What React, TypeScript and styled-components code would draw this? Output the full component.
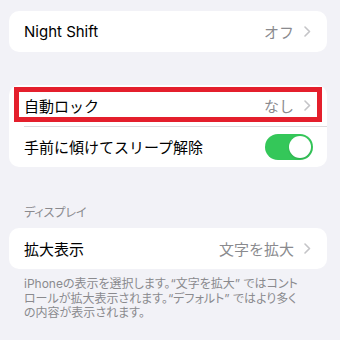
import React from "react";
import styled, { createGlobalStyle } from "styled-components";

const Global = createGlobalStyle`
  html, body { margin: 0; padding: 0; background: #f2f2f7; }
  body {
    font-family: Inter, "Noto Sans CJK JP", "Noto Sans", sans-serif;
    -webkit-font-smoothing: antialiased;
  }
`;

const Page = styled.div`
  width: 340px;
  height: 340px;
  box-sizing: border-box;
  padding: 11px 13px 0 9px;
  display: flex;
  flex-direction: column;
  background: #f2f2f7;
  overflow: hidden;
`;

const Card = styled.div<{ $mt?: number }>`
  position: relative;
  background: #ffffff;
  border-radius: 10px;
  margin-top: ${(p) => p.$mt ?? 0}px;
  display: flex;
  flex-direction: column;
`;

const Row = styled.div<{ $divider?: boolean }>`
  height: 41px;
  display: flex;
  align-items: center;
  padding: 0 15px 0 15px;
  position: relative;
  box-sizing: border-box;
  ${(p) =>
    p.$divider
      ? `&::before { content: ""; position: absolute; left: 15px; right: 0; top: 0; height: 1px; background: #dcdce0; }`
      : ""}
`;

const Label = styled.span`
  flex: 1;
  font-size: 15px;
  color: #000;
  white-space: nowrap;
`;

const Value = styled.span`
  font-size: 15px;
  color: #8a8a8e;
  white-space: nowrap;
  margin-right: 10px;
`;

const Chevron = () => (
  <svg width="7" height="11" viewBox="0 0 7 11" style={{ marginRight: 1 }}>
    <path d="M1 1 L5.5 5.5 L1 10" fill="none" stroke="#c4c4c7" strokeWidth="1.6" strokeLinecap="round" strokeLinejoin="round" />
  </svg>
);

const Track = styled.div`
  width: 48px;
  height: 26px;
  border-radius: 13px;
  background: #34c759;
  position: relative;
  margin-right: -1px;
`;

const Thumb = styled.div`
  position: absolute;
  right: 2px;
  top: 2px;
  width: 22px;
  height: 22px;
  border-radius: 50%;
  background: #fff;
  box-shadow: 0 1px 2px rgba(0, 0, 0, 0.15);
`;

const Highlight = styled.div`
  position: absolute;
  left: 5px;
  top: 2px;
  width: 308px;
  height: 35px;
  box-sizing: border-box;
  border: 5px solid #e41f2c;
  pointer-events: none;
`;

const SectionHeader = styled.div`
  margin-top: 38px;
  padding-left: 15px;
  font-size: 12px;
  line-height: 15px;
  color: #8a8a8e;
  font-feature-settings: "palt";
`;

const Footer = styled.div`
  margin-top: 8px;
  padding: 0 10px 0 15px;
  font-size: 12px;
  line-height: 14.5px;
  color: #8a8a8e;
  font-feature-settings: "palt";
  white-space: nowrap;
`;

export default function App() {
  return (
    <>
      <Global />
      <Page>
        <Card>
          <Row>
            <Label>Night Shift</Label>
            <Value>オフ</Value>
            <Chevron />
          </Row>
        </Card>
        <Card $mt={33}>
          <Row>
            <Label>自動ロック</Label>
            <Value>なし</Value>
            <Chevron />
          </Row>
          <Row $divider>
            <Label>手前に傾けてスリープ解除</Label>
            <Track>
              <Thumb />
            </Track>
          </Row>
          <Highlight />
        </Card>
        <SectionHeader>ディスプレイ</SectionHeader>
        <Card $mt={8}>
          <Row>
            <Label>拡大表示</Label>
            <Value>文字を拡大</Value>
            <Chevron />
          </Row>
        </Card>
        <Footer>
          iPhoneの表示を選択します。“文字を拡大” ではコント
          <br />
          ロールが拡大表示されます。“デフォルト” ではより多く
          <br />
          の内容が表示されます。
        </Footer>
      </Page>
    </>
  );
}
